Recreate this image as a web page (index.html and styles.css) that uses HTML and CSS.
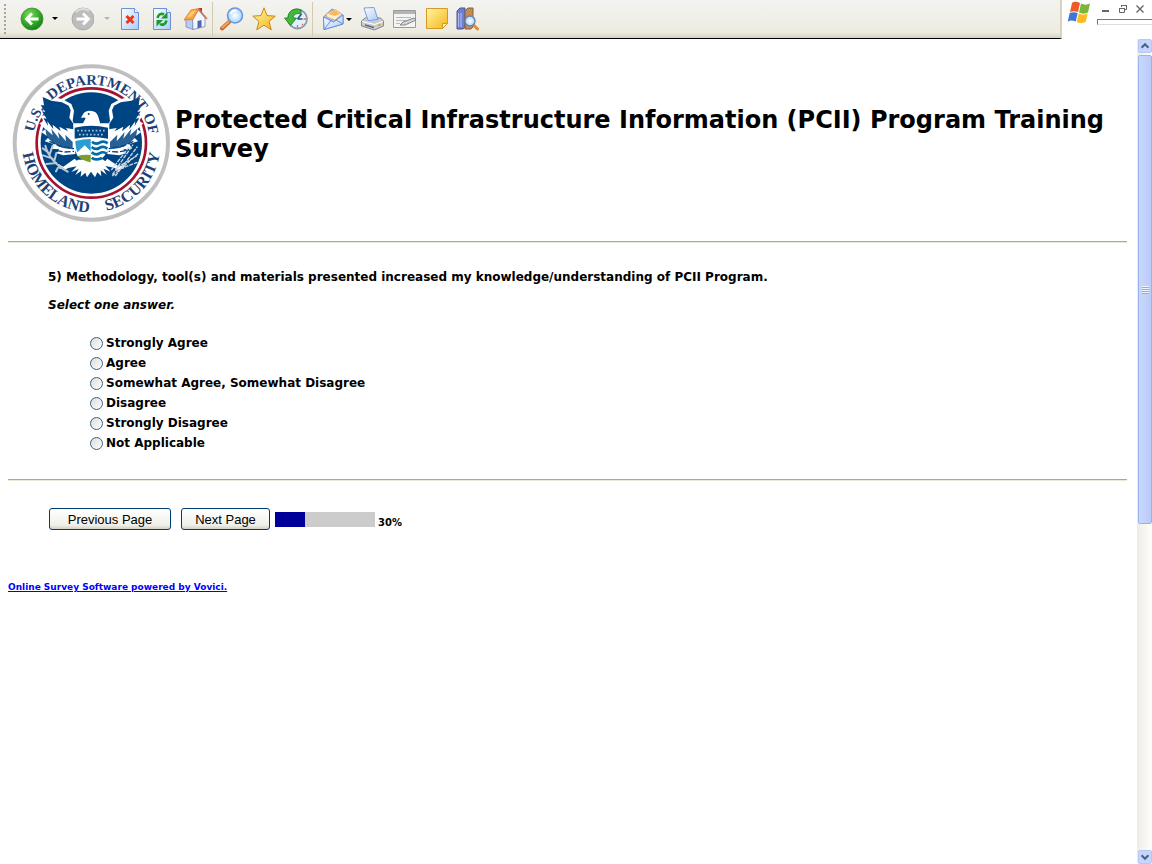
FILE: index.html
```html
<!DOCTYPE html>
<html lang="en">
  <head>
    <meta charset="UTF-8">
    <meta name="viewport" content="width=device-width, initial-scale=1.0">
    <title>Protected Critical Infrastructure Information (PCII) Program Training Survey</title>
    <link rel="stylesheet" href="styles.css">
  </head>
  <body>
    <div class="top">
      <div class="toolbar">
        <div class="grip"></div>
        <div class="group">
          <button type="button" class="tool" aria-label="Back">
            <svg viewBox="0 0 24 24">
              <defs>
                <radialGradient id="green" cx=".4" cy=".3" r=".75"><stop offset="0" stop-color="#7edb5c"/><stop offset=".55" stop-color="#35ab2b"/><stop offset="1" stop-color="#127c14"/></radialGradient>
                <linearGradient id="paper" x1="0" y1="0" x2="1" y2="1"><stop offset="0" stop-color="#fff"/><stop offset="1" stop-color="#a9ccf8"/></linearGradient>
                <radialGradient id="glass"><stop offset="0" stop-color="#fff"/><stop offset="1" stop-color="#a6d4fb"/></radialGradient>
                <linearGradient id="gold" x1="0" y1="0" x2="1" y2="1"><stop offset="0" stop-color="#fff6a0"/><stop offset="1" stop-color="#f6b51d"/></linearGradient>
              </defs>
              <circle cx="12" cy="12" r="11" fill="url(#green)" stroke="#3d8e38" stroke-width=".8"/>
              <path d="M18.500 12H7M12 6.500L6.500 12l5.500 5.500" fill="none" stroke="#fff" stroke-width="2.800"/>
            </svg>
          </button>
          <button type="button" class="caret" aria-label="Back history"><svg viewBox="0 0 10 24"><path d="M0 10h6L3 13z"/></svg></button>
          <button type="button" class="tool" aria-label="Forward">
            <svg viewBox="0 0 24 24">
              <circle cx="13" cy="12" r="11" fill="#bdbdbd" stroke="#a3a3a3" stroke-width=".8"/>
              <path d="M6 5a10 10 0 0 1 13-1" fill="none" stroke="#dedede" stroke-width="2"/>
              <path d="M6.500 12H18M13 6.500l5.500 5.500-5.500 5.500" fill="none" stroke="#fff" stroke-width="2.800"/>
            </svg>
          </button>
          <button type="button" class="caret off" aria-label="Forward history"><svg viewBox="0 0 10 24"><path d="M2 10h6l-3 3z"/></svg></button>
          <button type="button" class="tool" aria-label="Stop">
            <svg viewBox="0 0 24 24">
              <path d="M1.500 1.500h13l4 4v17h-17z" fill="url(#paper)" stroke="#6d8ed8"/>
              <path d="M14.500 1.500v4h4" fill="#fff" stroke="#6d8ed8"/>
              <path d="M6.500 9l7 7M13.500 9l-7 7" stroke="#f03514" stroke-width="3"/>
            </svg>
          </button>
          <button type="button" class="tool" aria-label="Refresh">
            <svg viewBox="0 0 24 24">
              <path d="M1.500 1.500h13l4 4v17h-17z" fill="url(#paper)" stroke="#6d8ed8"/>
              <path d="M14.500 1.500v4h4" fill="#fff" stroke="#6d8ed8"/>
              <path d="M5.500 11c1-4 4-5 6.500-3.500M14.500 13.500c-1 4-4 5-6.500 3.500" fill="none" stroke="#169e22" stroke-width="2.600"/>
              <path d="M15.500 5v6.500H9zM4.500 19.500V13H11z" fill="#169e22"/>
            </svg>
          </button>
          <button type="button" class="tool" aria-label="Home">
            <svg viewBox="0 0 24 24">
              <path d="M15 1h3v6h-3z" fill="#c43422"/>
              <path d="M2 12l7-1v11.500l-7-2.500z" fill="#b9cbf3" stroke="#7788b8" stroke-width=".8"/>
              <path d="M8.500 12L14.500 3 21 11v8.500L9 22.500z" fill="#f3f7ff" stroke="#7788b8" stroke-width=".8"/>
              <path d="M13.500 14l4-1v7l-4 1.500z" fill="#4e66ad"/>
              <path d="M0 13L7 3l8-1.500-6 11z" fill="#ffa43a" stroke="#de7a20" stroke-width=".8"/>
              <path d="M3 10l5-6 4-.8-5 6.500z" fill="#ffc878"/>
              <path d="M14.500 2L23 12" stroke="#c9784c" stroke-width="1.500"/>
            </svg>
          </button>
        </div>
        <div class="group">
          <button type="button" class="tool" aria-label="Search">
            <svg viewBox="0 0 24 24">
              <path d="M9 15l-7 6.500" stroke="#b96a38" stroke-width="4" stroke-linecap="round"/>
              <path d="M8.500 15l-6 5.500" stroke="#f9a150" stroke-width="2.200" stroke-linecap="round"/>
              <circle cx="15" cy="8.500" r="7.500" fill="url(#glass)" stroke="#6c96df" stroke-width="1.600"/>
              <path d="M10.500 7c1-3 4-4 6-3" fill="none" stroke="#fff" stroke-width="2"/>
            </svg>
          </button>
          <button type="button" class="tool" aria-label="Favorites">
            <svg viewBox="0 0 24 24"><path d="M12 .8l3 7.700 8.300.7-6.300 5.400 2.300 8.200-7.300-4.600-7.300 4.600L7 14.600.8 9.200 9 8.500z" fill="url(#gold)" stroke="#c78a1b"/></svg>
          </button>
          <button type="button" class="tool" aria-label="History">
            <svg viewBox="0 0 24 24">
              <circle cx="13.500" cy="12" r="9.500" fill="#dff0ff" stroke="#8e9bad" stroke-width="1.800"/>
              <path d="M13.500 12l4-5M13.500 12h5" stroke="#344c78" stroke-width="1.600"/>
              <path d="M13.500 4v2M13.500 18v2.500M19.500 12h2.500M18 17l1 1" stroke="#ef6450" stroke-width="1.300"/>
              <path d="M17 3C10 0 4 4 4 11H.5l6 7.500L12.500 11H9c0-3 3-5.500 8-4z" fill="#45b83c" stroke="#1f8126" stroke-width=".9"/>
            </svg>
          </button>
        </div>
        <div class="group">
          <div class="split">
            <button type="button" class="tool" aria-label="Mail">
              <svg viewBox="0 0 24 24">
                <path d="M3.500 10L12 2l11 6v9L4 22.500z" fill="#9fc3f6" stroke="#6a91d9"/>
                <path d="M6 7l9-4.500L22 7l-7 6-8-3z" fill="#fff0d4" stroke="#dfa45c" stroke-width=".8"/>
                <path d="M8 7l7-4 5 4-5 2z" fill="#f9b85d"/>
                <path d="M3.500 10l10 5L23 8v9L4 22.500z" fill="url(#paper)" stroke="#6a91d9"/>
                <path d="M4 22.500l7-9M23 17l-7-4" stroke="#6a91d9"/>
              </svg>
            </button>
            <button type="button" class="caret small" aria-label="Mail options"><svg viewBox="0 0 8 24"><path d="M2 11h6l-3 3z"/></svg></button>
          </div>
          <button type="button" class="tool" aria-label="Print">
            <svg viewBox="0 0 24 24">
              <path d="M1.500 14l5-4 14 1 3 3v5l-9 4-13-4z" fill="#c9cbd0" stroke="#83868e"/>
              <path d="M4 1l10-.5 4 12-10 1z" fill="url(#paper)" stroke="#7d9ce0"/>
              <path d="M2 14.500l12.500 3 8.500-3" fill="none" stroke="#fff" stroke-width="1.200"/>
              <path d="M5 18l9 2.500" stroke="#666a70" stroke-width="1.600"/>
              <path d="M18 18.500l3-1" stroke="#d9a33c" stroke-width="1.500"/>
            </svg>
          </button>
          <button type="button" class="tool" aria-label="Edit">
            <svg viewBox="0 0 24 24">
              <path d="M1.500 3.500h22v17h-22z" fill="#f4f4f4" stroke="#9b9b9b"/>
              <path d="M2 4h21v3H2z" fill="#b4b4b4"/>
              <path d="M4 10.500h15M4 13.500h10M4 16.500h4" stroke="#b9b9b9"/>
              <path d="M8 18l3-3 11-4 2 2-11 5z" fill="#d5d5d5" stroke="#868686"/>
            </svg>
          </button>
          <button type="button" class="tool" aria-label="Note">
            <svg viewBox="0 0 24 24">
              <path d="M2.500 1.500h21v15l-5 5h-16z" fill="url(#gold)" stroke="#d59a25"/>
              <path d="M18.500 21.500v-5h5z" fill="#fff3ae" stroke="#d59a25"/>
            </svg>
          </button>
          <button type="button" class="tool" aria-label="Research">
            <svg viewBox="0 0 24 24">
              <path d="M1 4l3-3h5v19l-2 2H1z" fill="#6e7fd0" stroke="#47539c"/>
              <path d="M9 4l3-3h5v19l-2 2H9z" fill="#c28c56" stroke="#8a5f3c"/>
              <path d="M2.500 6v14M5 6v14" stroke="#adb8f1" stroke-width="1.200"/>
              <path d="M17.500 18l4 4" stroke="#e38c35" stroke-width="3" stroke-linecap="round"/>
              <circle cx="14" cy="14" r="5" fill="url(#glass)" stroke="#6684b0" stroke-width="1.400"/>
            </svg>
          </button>
        </div>
      </div>
      <div class="window">
        <svg class="flag" viewBox="0 0 24 24" aria-hidden="true">
          <path d="M5 3c3-2 5-1 8 0l-2 9c-3-1-5-1-8 0z" fill="#ef5a28"/>
          <path d="M14 3.500c3 1.500 6 1.500 9 0l-2 9c-3 1.500-6 1.500-9 0z" fill="#7ab637"/>
          <path d="M2.700 13c3-1 5-1 8 0l-2 8.500c-3-1-5-1.500-8 .3z" fill="#3b77d3"/>
          <path d="M11.700 13.500c3 1.500 6 1.500 9 0l-2 8.500c-3 1.500-6 1.500-9 0z" fill="#fbbc23"/>
        </svg>
        <div class="corner">
          <div class="controls">
            <button type="button" aria-label="Minimize"><svg viewBox="0 0 10 10"><path d="M1 7h7" stroke-width="2"/></svg></button>
            <button type="button" aria-label="Restore"><svg viewBox="0 0 10 10"><path d="M3.500 3V1.500h5v4H7M3 1.500h6M1.500 4.500h5v4h-5zM1 4.500h6"/></svg></button>
            <button type="button" aria-label="Close"><svg viewBox="0 0 10 10"><path d="M1.500 1.500l7 7M8.500 1.500l-7 7" stroke-width="1.400"/></svg></button>
          </div>
          <div class="slot"></div>
        </div>
      </div>
    </div>

    <div class="view">
      <main class="page">
        <header class="header">
          <svg class="seal" viewBox="0 0 501 510" role="img" aria-label="U.S. Department of Homeland Security">
            <defs>
              <path id="arc-top" d="M75 255A175 175 0 0 1 425 255"/>
              <path id="arc-bottom" d="M42 255A208 208 0 0 0 458 255"/>
            </defs>
            <circle cx="250" cy="255" r="230" fill="#fff" stroke="#bfbfbf" stroke-width="12"/>
            <circle cx="250" cy="255" r="164" fill="#fff" stroke="#a5122f" stroke-width="8"/>
            <circle cx="250" cy="255" r="152" fill="#004583"/>
            <!-- wings -->
            <g id="wings">
              <path d="M96 108l28 6 40 10 26 14 8 20-4 30 8 20v80l-36 4-20-6 8-12-26-2 8-14-26-8 12-12-22-16 12-8-18-18 14-6-12-16 16-2z" fill="#fff"/>
              <path d="M104 117l26 11 32 5 20 10 6 14-4 22 12 18v17l-22-4 6 10-26-14 4 14-24-20 2 14-18-24 2 14-14-24 10 2-14-22 10 2-14-20 10 0z" fill="#004583"/>
              <path d="M112 212l22 20-4-20 24 30-4-20 24 28-2-20 22 22v22l-30-4-28-14-20-20z" fill="#004583" opacity=".85"/>
              <path d="M124 250l30 14 44 8M146 278l24 4 28-2" fill="none" stroke="#004583" stroke-width="4" stroke-dasharray="18 6"/>
            </g>
            <use href="#wings" transform="translate(500 0) scale(-1 1)"/>
            <!-- tail and talons -->
            <path d="M210 305l-29 25 25-5-16 17 22-9-10 18 18-13-2 18 14-12 5 14 12-17 12 17 7-15 12 12-2-18 18 13-10-18 22 9-16-17 26 5-34-25z" fill="#fff"/>
            <path d="M200 302l-34 24-16-8 2 13 18 5 41-23zM298 302l36 24 16-8-2 13-18 5-41-23z" fill="#fff"/>
            <!-- shield -->
            <path d="M197 196h106v62q-2 42-53 60-50-18-53-60z" fill="#fff"/>
            <path d="M200 209q49-12 100 0v33q-49-10-100 0z" fill="#004583"/>
            <path d="M208 218h86M213 230h76" stroke="#a9c0d6" stroke-width="5" stroke-dasharray="5 6"/>
            <path d="M202 249q22-6 46-6v50h-34q-12-16-12-44z" fill="#2a9bd3"/>
            <path d="M205 286l25-24 18 18v15h-39z" fill="#fff"/>
            <path d="M208 294q19-5 40-3v22q-27-6-40-19z" fill="#7c9c2e"/>
            <path d="M252 251q11 10 23 3t24 2M251 267q11 10 23 3t24 2M251 283q11 10 23 3t22 1M251 299q11 10 31 1" fill="none" stroke="#006ba8" stroke-width="8"/>
            <!-- head -->
            <path d="M224 171q4-12 20-13 22-1 27 18l6 22h-53l9-18q-6-4-13 1 0-7 4-10z" fill="#fff"/>
            <circle cx="242" cy="168" r="3" fill="#004583"/>
            <!-- olive branch and arrows -->
            <path d="M179 341Q124 310 112 263M126 288l-22-17M134 302l-29-10M145 315l-30 3M126 286l8-23M139 309l6-24M154 322l-10 18" fill="none" stroke="#b9c9d9" stroke-width="6" stroke-linecap="round"/>
            <path d="M313 350l62-90M322 354l66-88M310 336l54-70M313 354l78-67M327 328l60-35M322 338l66-25" fill="none" stroke="#c9d5e1" stroke-width="4" stroke-dasharray="12 3"/>
            <text class="seal-text top-text"><textPath href="#arc-top" startOffset="13%">U.S.</textPath></text>
            <text class="seal-text top-text"><textPath href="#arc-top" startOffset="54%">DEPARTMENT</textPath></text>
            <text class="seal-text top-text"><textPath href="#arc-top" startOffset="90%">OF</textPath></text>
            <text class="seal-text bottom-text"><textPath href="#arc-bottom" startOffset="27%">HOMELAND</textPath></text>
            <text class="seal-text bottom-text"><textPath href="#arc-bottom" startOffset="76%">SECURITY</textPath></text>
          </svg>
          <h1>Protected Critical Infrastructure Information (PCII) Program Training Survey</h1>
        </header>

        <hr>

        <form class="survey">
          <fieldset class="question">
            <legend>5) Methodology, tool(s) and materials presented increased my knowledge/understanding of PCII Program.</legend>
            <p class="hint">Select one answer.</p>
            <div class="answers">
              <label><input type="radio" name="q5" value="1">Strongly Agree</label>
              <label><input type="radio" name="q5" value="2">Agree</label>
              <label><input type="radio" name="q5" value="3">Somewhat Agree, Somewhat Disagree</label>
              <label><input type="radio" name="q5" value="4">Disagree</label>
              <label><input type="radio" name="q5" value="5">Strongly Disagree</label>
              <label><input type="radio" name="q5" value="6">Not Applicable</label>
            </div>
          </fieldset>

          <hr>

          <div class="nav">
            <button type="button" class="btn prev">Previous Page</button>
            <button type="button" class="btn next">Next Page</button>
            <div class="bar"><div class="fill" style="width: 30%"></div></div>
            <span class="percent">30%</span>
          </div>
        </form>

        <footer><a href="#">Online Survey Software powered by Vovici.</a></footer>
      </main>

      <div class="scroll">
        <button type="button" class="arrow" aria-label="Scroll up"><svg viewBox="0 0 14 14"><path d="M3 9l4-4 4 4"/></svg></button>
        <div class="track"><div class="thumb"><span></span></div></div>
        <button type="button" class="arrow" aria-label="Scroll down"><svg viewBox="0 0 14 14"><path d="M3 5l4 4 4-4"/></svg></button>
      </div>
    </div>
  </body>
</html>
```
FILE: styles.css
```css
* {
  box-sizing: border-box;
}

body {
  margin: 0;
  min-height: 100vh;
  display: flex;
  flex-direction: column;
  background: white;
  color: black;
  font-family: Verdana, "DejaVu Sans", sans-serif;
  font-size: 12px;
  font-weight: bold;
}

button {
  padding: 0;
  border: none;
  background: transparent;
}

svg {
  display: block;
}

/* ---------- Toolbar ---------- */

.top {
  display: flex;
}

.toolbar {
  flex: 1;
  display: flex;
  align-items: center;
  height: 39px;
  padding-left: 4px;
  background: linear-gradient(#f3f3f1, #eeece1 85%, #d6d2c2);
  border-bottom: 1px solid black;
  border-right: 2px solid #d8d2bd;
}

.grip {
  width: 2px;
  height: 30px;
  margin-right: 14px;
  background: repeating-linear-gradient(#a9a596 0 2px, transparent 2px 4px);
}

.group {
  display: flex;
  align-items: center;
  gap: 8px;
  height: 34px;
}

.group + .group {
  margin-left: 4px;
  padding-left: 7px;
  border-left: 1px solid #d2cbb0;
}

.split {
  display: flex;
}

.tool,
.tool svg {
  width: 24px;
  height: 24px;
}

.caret,
.caret svg {
  width: 10px;
  height: 24px;
}

.small,
.small svg {
  width: 8px;
}

.off {
  fill: #b5b5b0;
}

.window {
  display: flex;
  width: 90px;
  padding-left: 5px;
}

.flag {
  width: 24px;
  height: 24px;
  margin-right: 6px;
}

.corner {
  flex: 1;
}

.controls {
  display: flex;
  justify-content: space-between;
  padding: 4px 7px 5px 4px;
}

.controls svg {
  width: 10px;
  height: 10px;
  fill: none;
  stroke: #666;
}

.slot {
  height: 6px;
  border: 1px solid #777;
  border-right: none;
  border-bottom-color: #ddd;
}

/* ---------- Page ---------- */

.view {
  flex: 1;
  display: flex;
}

.page {
  flex: 1;
  padding: 19px 10px 8px 8px;
}

.header {
  display: flex;
  align-items: flex-start;
  padding-bottom: 13px;
}

.seal {
  flex: none;
  width: 167px;
  height: 170px;
}

.seal-text {
  fill: #1d4176;
  font-family: "Liberation Serif", serif;
  font-weight: bold;
  text-anchor: middle;
}

.top-text {
  font-size: 44px;
}

.bottom-text {
  font-size: 48px;
}

h1 {
  margin: 48px 0 0;
  font-size: 24px;
  line-height: 29px;
}

hr {
  height: 2px;
  margin: 0;
  border: none;
  border-top: 1px solid #aca899;
  border-bottom: 1px solid #ece9d8;
}

.question {
  margin: 0;
  padding: 26px 0 26px 40px;
  border: none;
}

legend {
  float: left;
  width: 100%;
  padding: 0;
  line-height: 16px;
}

.hint {
  clear: both;
  margin: 0;
  padding-top: 12px;
  font-style: italic;
  line-height: 16px;
}

.answers {
  padding: 20px 0 0 42px;
}

.answers label {
  display: flex;
  align-items: center;
  gap: 3px;
  width: max-content;
  height: 20px;
}

.answers input {
  appearance: none;
  width: 13px;
  height: 13px;
  margin: 0;
  border: 1px solid #2c6396;
  border-radius: 50%;
  background: linear-gradient(135deg, #dcdcd7, white);
}

.answers input:checked {
  background: radial-gradient(#21a121 35%, white 40%);
}

.nav {
  display: flex;
  align-items: center;
  padding: 27px 0 0 41px;
}

.btn {
  height: 22px;
  border: 1px solid #003c74;
  border-radius: 3px;
  background: linear-gradient(white, #f0f0ea 80%, #d6d0c5);
  font-family: "Liberation Sans", Arial, sans-serif;
  font-size: 13px;
}

.prev {
  width: 122px;
  margin-right: 10px;
}

.next {
  width: 89px;
  margin-right: 5px;
}

.bar {
  width: 100px;
  height: 15px;
  background: #ccc;
}

.fill {
  height: 100%;
  background: #009;
}

.percent {
  padding: 8px 0 0 3px;
  font-size: 10px;
  line-height: 14px;
}

footer {
  padding-top: 50px;
  font-size: 9px;
  line-height: 14px;
}

a {
  color: #00f;
}

/* ---------- Scrollbar ---------- */

.scroll {
  display: flex;
  flex-direction: column;
  width: 15px;
  padding-left: 1px;
  background: linear-gradient(90deg, #eeede5, #fefefb);
}

.arrow {
  height: 14px;
  border: 1px solid #b4c8f6;
  border-radius: 2px;
  background: #c6d5fd;
}

.arrow svg {
  width: 12px;
  height: 12px;
  fill: none;
  stroke: #4d6185;
  stroke-width: 2.500;
}

.track {
  flex: 1;
  padding-top: 2px;
}

.thumb {
  display: flex;
  align-items: center;
  justify-content: center;
  height: 59%;
  border: 1px solid #98b4ef;
  border-radius: 2px;
  background: linear-gradient(90deg, #c9d7fc, #b9cbf9);
}

.thumb span {
  width: 7px;
  height: 8px;
  background: repeating-linear-gradient(#eef4fe 0 1px, #8caeee 1px 2px);
}
```
